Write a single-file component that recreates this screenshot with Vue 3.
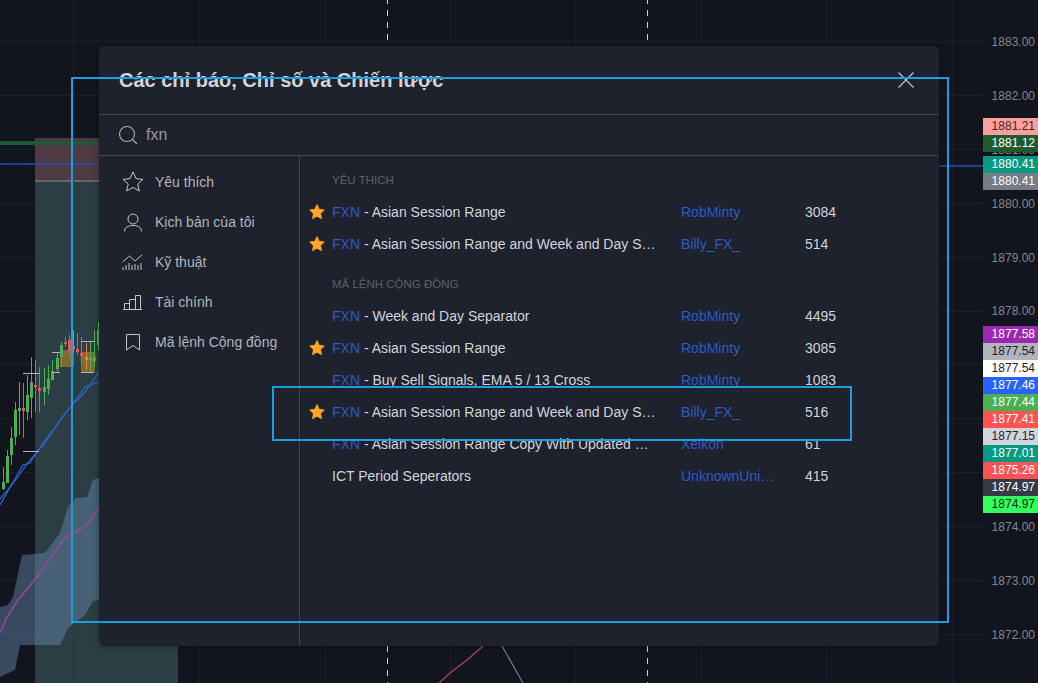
<template>
  <div class="page">
    <svg class="chart" width="1038" height="683" viewBox="0 0 1038 683">
      <g stroke="#1c202b" stroke-width="1">
        <line v-for="x in gridX" :key="x" :x1="x + 0.5" :x2="x + 0.5" y1="0" y2="683" />
        <line v-for="(p, i) in prices" :key="p" x1="0" x2="983" :y1="gridY(i)" :y2="gridY(i)" />
      </g>
      <rect x="35" y="181" width="143" height="502" fill="#2a3e44" />
      <rect x="35" y="138" width="143" height="43" fill="#4d3a42" />
      <line x1="35" x2="178" y1="181" y2="181" stroke="#8f8f95" />
      <rect x="0" y="141" width="99" height="4" fill="#1d5a30" />
      <line x1="0" x2="983" y1="164" y2="166" stroke="#2a4db5" stroke-width="1.3" />
      <g stroke="#2a3a40"><line v-for="(p, i) in prices.slice(6)" :key="p" x1="35" x2="178" :y1="gridY(i + 6)" :y2="gridY(i + 6)" /><line x1="73.5" x2="73.5" y1="181" y2="683" /></g>

      <polygon
        points="0,607 8,605 13,597 22,555 45,553 60,533 68,507 75,498 87,497 93,480 99,478 99,600 93,601 85,615 68,628 60,645 20,645 15,670 0,677"
        fill="#6d92bd"
        fill-opacity="0.42"
      />
      <polyline points="0,633 7,617 18,600 37,577 58,547 65,538 75,532 87,525 99,508" fill="none" stroke="#97489f" stroke-width="1.5" />
      <polyline points="0,505 23,465 30,463 43,443 72,405 85,392 99,372" fill="none" stroke="#2f63d6" stroke-width="1.2" />
      <polyline points="0,499 12,485 30,460 45,443 60,420 72,405 85,387 99,382" fill="none" stroke="#2f63d6" stroke-width="1.2" />

      <rect x="60" y="350" width="14" height="17" fill="#7e6a30" />
      <rect x="81" y="352" width="14" height="20" fill="#7e6a30" />
      <g v-for="c in candles" :key="c.x" :fill="c.color">
        <rect :x="c.x" :y="c.top" width="1" :height="c.bottom - c.top" />
        <rect :x="c.x - 1" :y="c.open" width="3" :height="c.close - c.open" />
      </g>
      <g stroke="#b4b6bb">
        <line v-for="t in ticks" :key="t.join()" :x1="t[0]" :x2="t[1]" :y1="t[2]" :y2="t[2]" />
      </g>

      <polyline points="439,683 450,673 467,660 483,646" fill="none" stroke="#b0475a" stroke-width="1.2" />
      <line x1="502" y1="646" x2="523" y2="683" stroke="#787b86" stroke-width="1.2" />
      <g stroke="#e6e63c" stroke-dasharray="6 6">
        <line x1="387.5" x2="387.5" y1="-2" y2="46" />
        <line x1="647.5" x2="647.5" y1="-2" y2="46" />
        <line x1="387.5" x2="387.5" y1="646" y2="683" />
        <line x1="647.5" x2="647.5" y1="646" y2="683" />
      </g>
    </svg>

    <div class="axis">
      <div v-for="p in prices" :key="p" class="axisLabel">{{ p }}</div>
    </div>
    <div class="tags tagsTop">
      <div v-for="t in topTags" :key="t.id" class="tag" :style="{ background: t.bg, color: t.fg, marginTop: t.gap }">
        {{ t.value }}
      </div>
    </div>
    <div class="tags tagsBottom">
      <div v-for="t in bottomTags" :key="t.id" class="tag" :style="{ background: t.bg, color: t.fg }">
        {{ t.value }}
      </div>
    </div>

    <div class="dialog">
      <header class="dialogHeader">
        <h1>Các chỉ báo, Chỉ số và Chiến lược</h1>
        <svg class="close" width="16" height="16" viewBox="0 0 16 16">
          <path d="M.5.5l15 15M15.5.5l-15 15" stroke="#c4c7cf" stroke-width="1.2" fill="none" />
        </svg>
      </header>
      <div class="search">
        <svg width="20" height="20" viewBox="0 0 20 20" fill="none" stroke="#a8abb4" stroke-width="1.1">
          <circle cx="8" cy="9" r="7.5" />
          <path d="M13.5 14.5l4.5 4.5" />
        </svg>
        <span>fxn</span>
      </div>
      <div class="dialogBody">
        <nav class="sidebar">
          <div v-for="item in menu" :key="item.label" class="menuItem">
            <svg width="28" height="28" viewBox="0 0 28 28" fill="none" stroke="#c2c5cd" stroke-width="1">
              <polygon v-if="item.icon === 'star'" points="14,4 17,10.6 24,11.4 18.8,16 20.3,23 14,19.4 7.7,23 9.2,16 4,11.4 11,10.6" />
              <template v-if="item.icon === 'user'">
                <circle cx="14" cy="11" r="5" />
                <path d="M5.5 23.5C5.5 19.5 9 17.5 14 17.5s8.5 2 8.5 6" />
              </template>
              <template v-if="item.icon === 'tech'">
                <path d="M3.5 14l7-6 5.5 5 7-6" />
                <path d="M4 22v-3M7 22v-5M10 22v-7M13 22v-5M16 22v-6M19 22v-5M22 22v-7" />
              </template>
              <template v-if="item.icon === 'bars'">
                <path d="M5.5 21.5v-6h5v6zM10.5 21.5v-10h6v10zM16.5 21.5V7.5h5v14zM4 21.5h19" />
              </template>
              <path v-if="item.icon === 'mark'" d="M7.5 6.5h13v15.5L14 17.5l-6.5 4.5z" />
            </svg>
            <span>{{ item.label }}</span>
          </div>
        </nav>
        <div class="list">
          <template v-for="section in sections" :key="section.title">
            <div class="sectionTitle">{{ section.title }}</div>
            <div v-for="row in section.rows" :key="row.name + row.count" class="row">
              <span class="starCell">
                <svg v-if="row.fav" width="16" height="16" viewBox="0 0 16 16">
                  <path
                    d="M8 .6l2.2 4.7 5.1.7-3.7 3.6.9 5.1L8 12.2l-4.5 2.5.9-5.1L.7 6l5.1-.7z"
                    fill="#ffa726"
                    stroke="#ffa726"
                    stroke-width="0.8"
                    stroke-linejoin="round"
                  />
                </svg>
              </span>
              <span class="name"><span v-if="row.fxn" class="blue">FXN</span>{{ row.fxn ? ' - ' : '' }}{{ row.name }}</span>
              <span class="author blue">{{ row.author }}</span>
              <span class="count">{{ row.count }}</span>
            </div>
          </template>
        </div>
      </div>
    </div>

    <div class="frame frameLarge"></div>
    <div class="frame frameSmall"></div>
  </div>
</template>

<script setup>
const gridX = [73, 199, 325, 450, 575, 701, 826, 952]
const prices = [
  '1883.00', '1882.00', '1881.00', '1880.00', '1879.00', '1878.00',
  '1877.00', '1876.00', '1875.00', '1874.00', '1873.00', '1872.00',
]
const gridY = (i) => Math.round(41 + i * 53.9) + 0.5

const green = '#4caf50'
const red = '#ef5350'
// x, wick top, wick bottom, body top, body bottom, colour
const candles = [
  [3, 467, 490, 482, 489, green],
  [7, 450, 483, 456, 483, green],
  [11, 427, 465, 438, 455, green],
  [15, 402, 445, 410, 437, green],
  [19, 382, 435, 408, 411, green],
  [23, 383, 438, 408, 411, red],
  [27, 375, 420, 395, 412, green],
  [31, 357, 418, 382, 398, green],
  [35, 360, 412, 385, 387, red],
  [39, 367, 412, 388, 391, red],
  [44, 368, 405, 387, 392, green],
  [48, 365, 395, 379, 389, green],
  [52, 360, 380, 371, 380, green],
  [57, 353, 372, 358, 369, green],
  [61, 342, 367, 345, 357, green],
  [65, 337, 347, 342, 344, red],
  [69, 335, 357, 340, 351, red],
  [73, 330, 353, 346, 349, '#f0616a'],
  [77, 333, 355, 349, 352, red],
  [81, 337, 363, 353, 356, red],
  [86, 343, 370, 357, 360, '#f57c3a'],
  [90, 342, 372, 358, 360, green],
  [94, 330, 367, 357, 361, green],
  [98, 322, 350, 330, 345, green],
].map(([x, top, bottom, open, close, color]) => ({ x, top, bottom, open, close, color }))

// x from, x to, y
const ticks = [
  [23, 39, 373.5], [23, 39, 451.5], [52, 60, 352.5], [52, 60, 372.5],
  [81, 94, 341.5], [81, 94, 372.5],
]

const topTags = [
  { id: 1, value: '1881.21', bg: '#fc9f9f', fg: '#4a2326' },
  { id: 2, value: '1881.12', bg: '#1e5c2e', fg: '#ffffff' },
  { id: 3, value: '1880.41', bg: '#089981', fg: '#ffffff', gap: '4px' },
  { id: 4, value: '1880.41', bg: '#787b86', fg: '#ffffff' },
]
const bottomTags = [
  { id: 1, value: '1877.58', bg: '#9c27b0', fg: '#ffffff' },
  { id: 2, value: '1877.54', bg: '#b2b5be', fg: '#1e222d' },
  { id: 3, value: '1877.54', bg: '#ffffff', fg: '#1e222d' },
  { id: 4, value: '1877.46', bg: '#2962ff', fg: '#ffffff' },
  { id: 5, value: '1877.44', bg: '#4caf50', fg: '#ffffff' },
  { id: 6, value: '1877.41', bg: '#ff5252', fg: '#ffffff' },
  { id: 7, value: '1877.15', bg: '#d1d4dc', fg: '#1e222d' },
  { id: 8, value: '1877.01', bg: '#089981', fg: '#ffffff' },
  { id: 9, value: '1875.26', bg: '#ff5252', fg: '#ffffff' },
  { id: 10, value: '1874.97', bg: '#363a45', fg: '#ffffff' },
  { id: 11, value: '1874.97', bg: '#33ff5c', fg: '#0c2a12' },
]

const menu = [
  { label: 'Yêu thích', icon: 'star' },
  { label: 'Kịch bản của tôi', icon: 'user' },
  { label: 'Kỹ thuật', icon: 'tech' },
  { label: 'Tài chính', icon: 'bars' },
  { label: 'Mã lệnh Cộng đồng', icon: 'mark' },
]

const sections = [
  {
    title: 'YÊU THÍCH',
    rows: [
      { fav: true, fxn: true, name: 'Asian Session Range', author: 'RobMinty', count: 3084 },
      { fav: true, fxn: true, name: 'Asian Session Range and Week and Day Separator', author: 'Billy_FX_', count: 514 },
    ],
  },
  {
    title: 'MÃ LỆNH CỘNG ĐỒNG',
    rows: [
      { fxn: true, name: 'Week and Day Separator', author: 'RobMinty', count: 4495 },
      { fav: true, fxn: true, name: 'Asian Session Range', author: 'RobMinty', count: 3085 },
      { fxn: true, name: 'Buy Sell Signals, EMA 5 / 13 Cross', author: 'RobMinty', count: 1083 },
      { fav: true, fxn: true, name: 'Asian Session Range and Week and Day Separator', author: 'Billy_FX_', count: 516 },
      { fxn: true, name: 'Asian Session Range Copy With Updated Sessions', author: 'Xelkon', count: 61 },
      { name: 'ICT Period Seperators', author: 'UnknownUnicorn', count: 415 },
    ],
  },
]
</script>

<style>
html,
body {
  margin: 0;
  overflow: hidden;
  background: #12151e;
}
</style>

<style scoped>
.page {
  position: relative;
  width: 1038px;
  height: 683px;
  overflow: hidden;
  background: #12151e;
  font-family: 'Liberation Sans', Arial, sans-serif;
}

.chart {
  position: absolute;
  left: 0;
  top: 0;
}

.axis {
  position: absolute;
  left: 983px;
  top: 15px;
  width: 55px;
}

.axisLabel {
  height: 53.9px;
  line-height: 54px;
  padding-right: 3px;
  text-align: right;
  font-size: 12px;
  color: #83868f;
}

.tags {
  position: absolute;
  left: 983px;
  width: 55px;
}

.tagsTop {
  top: 118px;
}

.tagsBottom {
  top: 326px;
}

.tag {
  height: 17px;
  line-height: 17px;
  padding-right: 3px;
  text-align: right;
  font-size: 12px;
}

.dialog {
  position: absolute;
  left: 99px;
  top: 46px;
  width: 840px;
  height: 600px;
  display: flex;
  flex-direction: column;
  background: #1e222d;
  border-radius: 6px;
  box-shadow: 0 0 6px rgba(0, 0, 0, 0.35);
  overflow: hidden;
}

.dialogHeader {
  height: 69px;
  flex: none;
  box-sizing: border-box;
  display: flex;
  align-items: center;
  justify-content: space-between;
  padding: 0 25px 0 20px;
  border-bottom: 1px solid #434651;
}

h1 {
  margin: 0;
  font-size: 20px;
  font-weight: bold;
  color: #d1d4dc;
}

.search {
  height: 41px;
  flex: none;
  box-sizing: border-box;
  display: flex;
  align-items: center;
  gap: 7px;
  padding: 0 0 0 20px;
  border-bottom: 1px solid #434651;
  font-size: 16px;
  color: #9598a1;
}

.dialogBody {
  flex: 1;
  display: flex;
  min-height: 0;
}

.sidebar {
  width: 201px;
  flex: none;
  box-sizing: border-box;
  padding-top: 6px;
  border-right: 1px solid #434651;
}

.menuItem {
  height: 40px;
  display: flex;
  align-items: center;
  gap: 8px;
  padding-left: 20px;
  font-size: 14px;
  color: #b2b5be;
}

.list {
  flex: 1;
  padding-top: 8px;
}

.sectionTitle {
  height: 32px;
  line-height: 32px;
  padding-left: 32px;
  font-size: 11.5px;
  color: #5d606b;
}

.row + .sectionTitle {
  margin-top: 8px;
}

.row {
  height: 32px;
  display: flex;
  align-items: center;
  font-size: 14px;
  color: #d1d4dc;
}

.starCell {
  width: 32px;
  flex: none;
  display: flex;
  justify-content: flex-end;
  padding-right: 7px;
  box-sizing: border-box;
}

.name {
  width: 326px;
  flex: none;
  overflow: hidden;
  white-space: nowrap;
  text-overflow: ellipsis;
}

.author {
  width: 94px;
  flex: none;
  margin-left: 23px;
  overflow: hidden;
  white-space: nowrap;
  text-overflow: ellipsis;
}

.count {
  margin-left: 30px;
}

.blue {
  color: #2f5ac7;
}

.frame {
  position: absolute;
  box-sizing: border-box;
  border: 2px solid #1c9fdc;
}

.frameLarge {
  left: 71px;
  top: 77px;
  width: 878px;
  height: 546px;
}

.frameSmall {
  left: 272px;
  top: 386px;
  width: 580px;
  height: 55px;
}
</style>
